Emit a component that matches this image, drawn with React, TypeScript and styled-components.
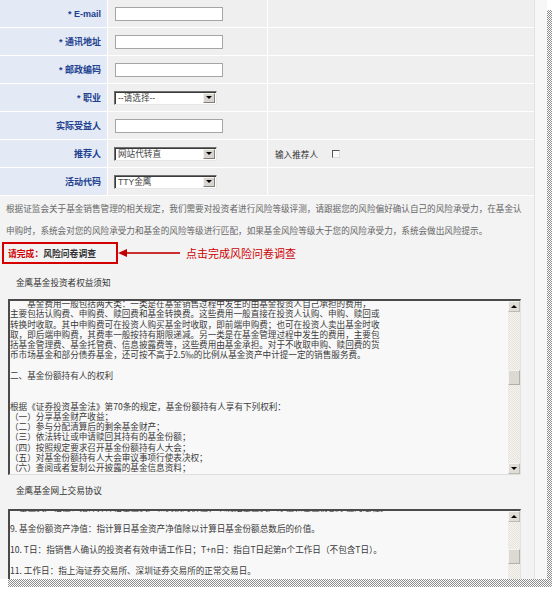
import React from "react";
import styled, { createGlobalStyle } from "styled-components";

const GlobalStyle = createGlobalStyle`
  html, body {
    margin: 0;
    padding: 0;
    background: #ffffff;
  }
  body {
    font-family: "Liberation Sans", "Noto Sans CJK SC", sans-serif;
    color: #333;
  }
`;

const checker = (dark: string, light: string) =>
  `repeating-conic-gradient(${dark} 0 25%, ${light} 0 50%) 0 0 / 2px 2px`;

const Shell = styled.div`
  display: grid;
  grid-template-columns: 547px 5px;
  grid-template-rows: 579px 8px;
`;

const Panel = styled.div`
  grid-column: 1;
  grid-row: 1;
  background: #f7f7f7;
  overflow: hidden;
`;

const ShadowRight = styled.div`
  grid-column: 2;
  grid-row: 1 / 3;
  margin-top: 10px;
  background: ${checker("#8c8c8c", "#ffffff")};
`;

const ShadowBottom = styled.div`
  grid-column: 1;
  grid-row: 2;
  margin-left: 8px;
  background: ${checker("#8c8c8c", "#ffffff")};
`;

const Content = styled.div`
  width: 534px;
  height: 100%;
  background: #f3f3f3;
  border-right: 1px solid #e3e3e3;
`;

/* ---------- form ---------- */

const FormTable = styled.div`
  display: grid;
  grid-template-columns: 107px 159px 1fr;
  grid-auto-rows: 27px;
  gap: 1px;
  background: #ffffff;
  padding-bottom: 1px;
`;

const LabelCell = styled.div`
  background: #e3eaf5;
  display: flex;
  align-items: center;
  justify-content: flex-end;
  padding-right: 6px;
  font-size: 9px;
  font-weight: bold;
  color: #21408f;
  white-space: nowrap;
`;

const ValueCell = styled.div`
  background: #efefef;
  display: flex;
  align-items: center;
  padding-left: 7px;
  font-size: 8.6px;
  color: #333;
  white-space: nowrap;
`;

const TextInput = styled.input`
  box-sizing: border-box;
  width: 108px;
  height: 14px;
  margin: 0;
  padding: 0 2px;
  border: 1px solid #a5a5a5;
  background: #ffffff;
  outline: none;
`;

const SelectBox = styled.div`
  box-sizing: border-box;
  width: 103px;
  height: 14px;
  margin-left: -1px;
  display: flex;
  align-items: stretch;
  border: 1px solid #e6e6e6;
  border-top-color: #6f6f6f;
  border-left-color: #6f6f6f;
  box-shadow: inset 1px 1px 0 #3a3a3a;
  background: #ffffff;
`;

const SelectText = styled.span`
  flex: 1;
  padding-left: 3px;
  font-size: 8.6px;
  line-height: 12px;
  color: #444;
`;

const DropButton = styled.span`
  width: 10px;
  margin: 1px 1px 1px 0;
  background: #d8d5ce;
  border: 1px solid #f4f3f0;
  border-right-color: #808080;
  border-bottom-color: #808080;
  display: flex;
  align-items: center;
  justify-content: center;
  &::after {
    content: "";
    border-left: 3px solid transparent;
    border-right: 3px solid transparent;
    border-top: 3px solid #000;
  }
`;

const CheckBox = styled.span`
  box-sizing: border-box;
  width: 8px;
  height: 8px;
  margin-left: 14px;
  background: #fafafa;
  border: 1px solid #dcdcdc;
  border-top-color: #555;
  border-left-color: #555;
`;

/* ---------- notice ---------- */

const Notice = styled.div`
  padding: 1px 0 0 6px;
  font-family: "Noto Sans CJK SC", sans-serif;
  font-size: 8.6px;
  line-height: 22px;
  color: #666;
  white-space: nowrap;
`;

const CalloutRow = styled.div`
  display: flex;
  align-items: center;
  margin-top: 1px;
  height: 22px;
`;

const RedBox = styled.div`
  box-sizing: border-box;
  width: 116px;
  height: 22px;
  margin-left: 2px;
  border: 2px solid #d40000;
  padding-left: 4px;
  display: flex;
  align-items: center;
  font-family: "Noto Sans CJK SC", sans-serif;
  font-size: 8.8px;
  font-weight: bold;
  color: #333;
  white-space: nowrap;
`;

const RedText = styled.span`
  color: #d00000;
`;

const Hint = styled.span`
  margin-left: 6px;
  font-family: "Noto Sans CJK SC", sans-serif;
  font-size: 11px;
  color: #cc0000;
  white-space: nowrap;
`;

const SectionTitle = styled.div<{ $gap: number }>`
  margin-top: ${(p) => p.$gap}px;
  padding-left: 16px;
  line-height: 20px;
  font-family: "Noto Sans CJK SC", sans-serif;
  font-size: 8.6px;
  color: #333;
  white-space: nowrap;
`;

/* ---------- textarea look-alike ---------- */

const Scroller = styled.div<{ $gap: number }>`
  box-sizing: border-box;
  margin: ${(p) => p.$gap}px 0 0 8px;
  width: 513px;
  height: 176px;
  display: flex;
  background: #f8f8f8;
  border-top: 2px solid #4a4a4a;
  border-left: 2px solid #4a4a4a;
  border-right: 1px solid #e2e2e2;
  border-bottom: 1px solid #dedede;
`;

const Pane = styled.div`
  flex: 1;
  overflow: hidden;
`;

const PaneText = styled.div<{ $lineHeight: number; $shift: number }>`
  margin-top: ${(p) => p.$shift}px;
  font-family: "Noto Sans CJK SC", sans-serif;
  font-size: 8.6px;
  line-height: ${(p) => p.$lineHeight}px;
  color: #3a3a3a;
  white-space: pre;
`;

const ScrollTrack = styled.div`
  width: 12px;
  display: flex;
  flex-direction: column;
  background: ${checker("#e6e3dc", "#f5f4f1")};
`;

const ScrollButton = styled.div<{ $down?: boolean }>`
  box-sizing: border-box;
  height: 11px;
  background: #e0ddd6;
  border: 1px solid #f6f5f2;
  border-right-color: #bdbab3;
  border-bottom-color: #bdbab3;
  display: flex;
  align-items: center;
  justify-content: center;
  margin-top: ${(p) => (p.$down ? "auto" : "0")};
  &::after {
    content: "";
    border-left: 3px solid transparent;
    border-right: 3px solid transparent;
    ${(p) =>
      p.$down ? "border-top: 3px solid #000;" : "border-bottom: 3px solid #000;"}
  }
`;

const Thumb = styled.div<{ $top: number }>`
  box-sizing: border-box;
  margin-top: ${(p) => p.$top}px;
  height: 15px;
  background: #dcd9d2;
  border: 1px solid #f4f3f0;
  border-right-color: #b3b0a9;
  border-bottom-color: #b3b0a9;
`;

const ArrowMark = () => (
  <svg width="62" height="10" viewBox="0 0 62 10">
    <polygon points="0,5 9,1 9,9" fill="#c00000" />
    <rect x="8" y="4.2" width="54" height="1.6" fill="#c00000" />
  </svg>
);

const rightsText = [
  "\u3000\u3000基金费用一般包括两大类：一类是在基金销售过程中发生的由基金投资人自己承担的费用，",
  "主要包括认购费、申购费、赎回费和基金转换费。这些费用一般直接在投资人认购、申购、赎回或",
  "转换时收取。其中申购费可在投资人购买基金时收取，即前端申购费；也可在投资人卖出基金时收",
  "取，即后端申购费，其费率一般按持有期限递减。另一类是在基金管理过程中发生的费用，主要包",
  "括基金管理费、基金托管费、信息披露费等，这些费用由基金承担。对于不收取申购、赎回费的货",
  "币市场基金和部分债券基金，还可按不高于2.5‰的比例从基金资产中计提一定的销售服务费。",
  "",
  "二、基金份额持有人的权利",
  "",
  "",
  "根据《证券投资基金法》第70条的规定，基金份额持有人享有下列权利：",
  "（一）分享基金财产收益；",
  "（二）参与分配清算后的剩余基金财产；",
  "（三）依法转让或申请赎回其持有的基金份额；",
  "（四）按照规定要求召开基金份额持有人大会；",
  "（五）对基金份额持有人大会审议事项行使表决权；",
  "（六）查阅或者复制公开披露的基金信息资料；",
].join("\n");

const agreementText = [
  "8. 基金资产估值：指计算评估基金资产和负债的价值，以确定基金资产净值和基金份额净值的过程。",
  "9. 基金份额资产净值：指计算日基金资产净值除以计算日基金份额总数后的价值。",
  "10. T日：指销售人确认的投资者有效申请工作日；T+n日：指自T日起第n个工作日（不包含T日）。",
  "11. 工作日：指上海证券交易所、深圳证券交易所的正常交易日。",
  "12. 开放日：指为投资者办理基金申购、赎回等业务的工作日。",
].join("\n");

const App: React.FC = () => {
  return (
    <>
      <GlobalStyle />
      <Shell>
        <Panel>
          <Content>
            <FormTable>
              <LabelCell>* E-mail</LabelCell>
              <ValueCell>
                <TextInput />
              </ValueCell>
              <ValueCell />

              <LabelCell>* 通讯地址</LabelCell>
              <ValueCell>
                <TextInput />
              </ValueCell>
              <ValueCell />

              <LabelCell>* 邮政编码</LabelCell>
              <ValueCell>
                <TextInput />
              </ValueCell>
              <ValueCell />

              <LabelCell>* 职业</LabelCell>
              <ValueCell>
                <SelectBox>
                  <SelectText>--请选择--</SelectText>
                  <DropButton />
                </SelectBox>
              </ValueCell>
              <ValueCell />

              <LabelCell>实际受益人</LabelCell>
              <ValueCell>
                <TextInput />
              </ValueCell>
              <ValueCell />

              <LabelCell>推荐人</LabelCell>
              <ValueCell>
                <SelectBox>
                  <SelectText>网站代转直</SelectText>
                  <DropButton />
                </SelectBox>
              </ValueCell>
              <ValueCell>
                输入推荐人
                <CheckBox />
              </ValueCell>

              <LabelCell>活动代码</LabelCell>
              <ValueCell>
                <SelectBox>
                  <SelectText>TTY金鹰</SelectText>
                  <DropButton />
                </SelectBox>
              </ValueCell>
              <ValueCell />
            </FormTable>

            <Notice>
              根据证监会关于基金销售管理的相关规定，我们需要对投资者进行风险等级评测，请跟据您的风险偏好确认自己的风险承受力，在基金认
              <br />
              申购时，系统会对您的风险承受力和基金的风险等级进行匹配，如果基金风险等级大于您的风险承受力，系统会做出风险提示。
            </Notice>

            <CalloutRow>
              <RedBox>
                <RedText>请完成：</RedText>风险问卷调查
              </RedBox>
              <ArrowMark />
              <Hint>点击完成风险问卷调查</Hint>
            </CalloutRow>

            <SectionTitle $gap={8}>金鹰基金投资者权益须知</SectionTitle>
            <Scroller $gap={7}>
              <Pane>
                <PaneText $lineHeight={10.27} $shift={-3}>
                  {rightsText}
                </PaneText>
              </Pane>
              <ScrollTrack>
                <ScrollButton />
                <Thumb $top={58} />
                <ScrollButton $down />
              </ScrollTrack>
            </Scroller>

            <SectionTitle $gap={5}>金鹰基金网上交易协议</SectionTitle>
            <Scroller $gap={9}>
              <Pane>
                <PaneText $lineHeight={21} $shift={-14}>
                  {agreementText}
                </PaneText>
              </Pane>
              <ScrollTrack>
                <ScrollButton />
                <Thumb $top={27} />
                <ScrollButton $down />
              </ScrollTrack>
            </Scroller>
          </Content>
        </Panel>
        <ShadowRight />
        <ShadowBottom />
      </Shell>
    </>
  );
};

export default App;
